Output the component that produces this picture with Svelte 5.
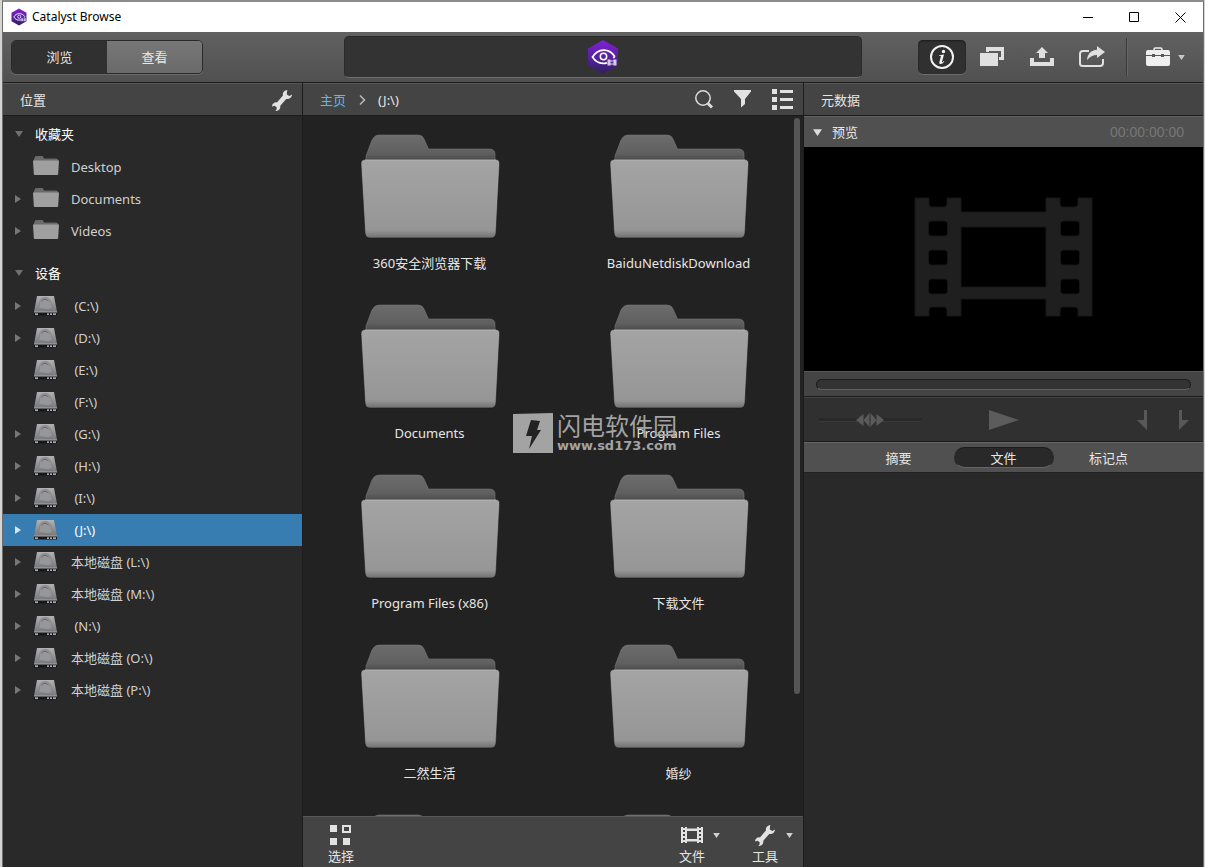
<script>
  let view = 'browse';
  let tab = '文件';
  let current = '(J:\\)';
  let infoOpen = true;
  let seek = 0;
  let jog = 50;

  const favorites = [
    { name: 'Desktop', leaf: true },
    { name: 'Documents' },
    { name: 'Videos' }
  ];
  const devices = [
    { name: '(C:\\)' },
    { name: '(D:\\)' },
    { name: '(E:\\)', leaf: true },
    { name: '(F:\\)', leaf: true },
    { name: '(G:\\)' },
    { name: '(H:\\)' },
    { name: '(I:\\)' },
    { name: '(J:\\)' },
    { name: '(L:\\)', label: '本地磁盘' },
    { name: '(M:\\)', label: '本地磁盘' },
    { name: '(N:\\)' },
    { name: '(O:\\)', label: '本地磁盘' },
    { name: '(P:\\)', label: '本地磁盘' }
  ];
  const folders = [
    '360安全浏览器下载', 'BaiduNetdiskDownload',
    'Documents', 'Program Files',
    'Program Files (x86)', '下载文件',
    '二然生活', '婚纱',
    '', ''
  ];
  const tabs = ['摘要', '文件', '标记点'];
</script>

<style>
  :global(body) {
    margin: 0;
    background: #d4d5d2;
    font-family: "Noto Sans", "Noto Sans CJK SC", sans-serif;
    font-size: 13px;
    line-height: 18px;
    color: #e6e6e6;
  }
  button, input {
    font: inherit;
    color: inherit;
    margin: 0;
    padding: 0;
    border: 0;
    background: none;
  }
  svg { display: block; flex: none; }
  h1, h2, h3 { margin: 0; font-size: inherit; font-weight: normal; }

  .window {
    box-sizing: border-box;
    height: 100vh;
    margin: 0 1px 0 2px;
    border: 1px solid #6d6d6d;
    border-width: 2px 1px 0 1px;
    border-top-color: #8c8c8a;
    display: flex;
    flex-direction: column;
    overflow: hidden;
    background: #292929;
  }

  /* title bar */
  .titlebar {
    flex: none;
    height: 30px;
    display: flex;
    align-items: center;
    background: #fff;
    color: #000;
    padding-left: 8px;
    gap: 5px;
  }
  .titlebar h1 { flex: 1; font-size: 12px; line-height: 30px; }
  .win-btns { display: flex; }
  .win-btns button { width: 46px; height: 30px; display: grid; place-items: center; }

  /* toolbar */
  .toolbar {
    flex: none;
    box-sizing: border-box;
    height: 51px;
    display: grid;
    grid-template-columns: 1fr minmax(100px, 518px) 1fr;
    align-items: center;
    background: linear-gradient(#616161, #505050);
    border-bottom: 1px solid #1c1c1c;
  }
  .segment {
    justify-self: start;
    box-sizing: border-box;
    display: flex;
    width: 192px;
    height: 34px;
    margin-left: 8px;
    border: 1px solid #2a2a2a;
    border-radius: 5px;
    overflow: hidden;
    box-shadow: 0 1px #6a6a6a;
  }
  .segment button { flex: 1; background: linear-gradient(#777, #6a6a6a); }
  .segment button.on { background: #303030; }
  .display {
    box-sizing: border-box;
    height: 42px;
    display: grid;
    place-items: center;
    background: #333;
    border: 1px solid #2a2a2a;
    border-bottom-color: #707070;
    border-radius: 5px;
  }
  .actions { justify-self: end; display: flex; align-items: center; }
  .actions button { width: 50px; height: 34px; display: grid; place-items: center; }
  .actions .info { width: 48px; border-radius: 5px; margin-right: 1px; }
  .actions .info.on {
    background: #303030;
    box-shadow: inset 0 1px 2px #1c1c1c, 0 1px #6c6c6c;
  }
  .divider { width: 1px; height: 38px; margin-left: 9px; background: #3a3a3a; border-right: 1px solid #666; }
  .actions .toolbox { display: flex; align-items: center; justify-content: center; gap: 8px; width: 75px; }

  /* panels */
  .panels {
    flex: 1;
    min-height: 0;
    display: grid;
    grid-template-columns: 299px minmax(0, 1fr) 399px;
  }
  .panel { display: flex; flex-direction: column; min-height: 0; min-width: 0; }
  .head {
    flex: none;
    box-sizing: border-box;
    height: 33px;
    display: flex;
    align-items: center;
    padding: 0 17px;
    background: #444;
    border-top: 1px solid #585858;
    border-bottom: 1px solid #1c1c1c;
  }
  .head h2 { flex: 1; }

  .locations { background: #292929; }
  .locations .head { padding-right: 9px; }
  .group { height: 35px; display: flex; align-items: center; gap: 12px; padding: 0 12px; }
  .tree + .group { margin-top: 8px; }
  .group h3 { color: #fff; }
  .tree { list-style: none; margin: 0; padding: 0; }
  .tree button {
    width: 100%;
    height: 32px;
    display: flex;
    align-items: center;
    text-align: left;
    padding-left: 12px;
    color: #d0d0d0;
  }
  .tree button.on { background: #377db1; color: #fff; }
  .arrow { width: 17px; color: #777; }
  .tree button.on .arrow { color: #d5e5f0; }
  .pic { width: 39px; height: 22px; }
  .label { white-space: pre; }

  .files {
    position: relative;
    background: #222;
    border-left: 1px solid #1c1c1c;
    border-right: 1px solid #1c1c1c;
  }
  .files .head { gap: 12px; padding-right: 9px; }
  .files .head a { color: #5cb8ea; text-decoration: none; }
  .tools { margin-left: auto; display: flex; gap: 20px; }
  .grid {
    flex: 1;
    min-height: 0;
    overflow: hidden;
    display: grid;
    grid-template-columns: 1fr 1fr;
    grid-auto-rows: 170px;
    padding-left: 2px;
  }
  .folder { display: flex; flex-direction: column; align-items: center; padding-top: 18px; }
  .folder span { margin-top: 15px; }
  .scroll {
    position: absolute;
    top: 35px;
    bottom: 173px;
    right: 3px;
    width: 6px;
    border-radius: 3px;
    background: #555;
  }
  .watermark {
    position: absolute;
    left: 210px;
    top: 330px;
    display: flex;
    gap: 4px;
    pointer-events: none;
    color: #a3a3a3;
  }
  .watermark strong { display: block; font-size: 24px; font-weight: 400; line-height: 26px; }
  .watermark small {
    display: block;
    font-family: "DejaVu Sans", sans-serif;
    font-size: 13px;
    font-weight: bold;
    line-height: 14px;
  }
  .bottom {
    flex: none;
    box-sizing: border-box;
    height: 51px;
    display: flex;
    align-items: start;
    gap: 32px;
    padding: 6px 10px 0 25px;
    background: #444;
    border-top: 1px solid #585858;
  }
  .bottom button { display: grid; grid-template-columns: auto auto; column-gap: 8px; justify-items: center; align-items: center; color: #e6e6e6; }
  .bottom button:first-child { margin-right: auto; }
  .bottom .icon { height: 24px; display: grid; place-items: center; }
  .bottom .text { grid-column: 1; }

  .metadata { background: #292929; }
  .preview-head {
    flex: none;
    box-sizing: border-box;
    height: 31px;
    display: flex;
    align-items: center;
    gap: 10px;
    padding: 0 19px 0 9px;
    background: #505050;
    border-top: 1px solid #626262;
  }
  .preview-head h3 { flex: 1; }
  .preview-head time { font-family: "Liberation Sans", sans-serif; font-size: 14px; color: #777; }
  .screen { flex: none; height: 224px; display: flex; align-items: start; justify-content: center; background: #000; }
  .screen svg { margin-top: 50px; }
  .seek {
    flex: none;
    box-sizing: border-box;
    height: 26px;
    display: flex;
    align-items: center;
    padding: 0 12px;
    background: #444;
    border-top: 1px solid #585858;
    border-bottom: 1px solid #1c1c1c;
  }
  input[type=range] { appearance: none; -webkit-appearance: none; width: 100%; box-sizing: border-box; }
  input[type=range]::-webkit-slider-thumb { -webkit-appearance: none; width: 1px; height: 1px; }
  .seek input {
    height: 11px;
    border-radius: 6px;
    background: #333;
    border: 1px solid #1c1c1c;
    border-bottom-color: #616161;
  }
  .transport {
    flex: none;
    box-sizing: border-box;
    height: 45px;
    display: grid;
    grid-template-columns: 1fr auto 1fr;
    align-items: center;
    padding: 0 14px;
    background: #303030;
    border-top: 1px solid #444;
    border-bottom: 1px solid #1c1c1c;
  }
  .jog { position: relative; width: 104px; display: grid; place-items: center; }
  .jog input { height: 4px; border-radius: 2px; background: #292929; border-bottom: 1px solid #383838; }
  .jog svg { position: absolute; pointer-events: none; }
  .marks { justify-self: end; display: flex; gap: 32px; }
  .tabs {
    flex: none;
    box-sizing: border-box;
    height: 31px;
    display: flex;
    justify-content: center;
    align-items: center;
    gap: 5px;
    background: #505050;
    border-top: 1px solid #666;
    border-bottom: 1px solid #222;
  }
  .tabs button { box-sizing: border-box; width: 100px; height: 21px; border: 1px solid transparent; border-radius: 11px; }
  .tabs button.on { background: #292929; border-color: #1c1c1c #292929 #646464; }
</style>

{#snippet wrench()}
  <svg width="22" height="24" viewBox="0 0 22 24" fill="#e2e2e2">
    <path d="M16.500 2c-3 .2-5.200 2.500-4.600 5.600L5.900 14.400C3.300 14.100 1 16 1 18.600l2.600-.8 2.200 1.700-.5 2.500-1.200.8c3.200.7 5.600-1.600 5.200-5l5.900-6.900c3 .7 5.700-1.400 5.900-4.500l-2.700 1.600-2.600-1.400.2-3z" />
  </svg>
{/snippet}

{#snippet down(size, fill)}
  <svg width={size} height={size - 2} viewBox="0 0 8 6"><path d="M0 0h8L4 6z" {fill} /></svg>
{/snippet}

{#snippet logo(w, h)}
  <svg width={w} height={h} viewBox="0 0 32 36">
    <defs>
      <linearGradient id="hex" x2="0" y2="1">
        <stop offset="0" stop-color="#8420d6" />
        <stop offset=".5" stop-color="#56219f" />
        <stop offset="1" stop-color="#30205e" />
      </linearGradient>
    </defs>
    <path d="M16 1 31 9.500v17L16 35 1 26.500v-17z" fill="url(#hex)" />
    <path d="M20 23.800c-6 1.700-11.500-.8-14.500-5.800C11 9 22 9 27.500 17.200c-.3 1-.7 1.500-1.200 2" fill="none" stroke="#fff" stroke-width="1.800" />
    <circle cx="16.500" cy="17.500" r="3.200" fill="none" stroke="#fff" stroke-width="1.500" />
    <path d="M21 20.500h8v6h-8z" fill="#56318c" />
    <path d="M20.500 20.500h3v1h3v-1h3v6h-3v-1h-3v1h-3zM23.500 22.500v2h3v-2z" fill="#d9c8ee" fill-rule="evenodd" />
  </svg>
{/snippet}

{#snippet smallFolder()}
  <svg width="28" height="20" viewBox="0 0 28 20">
    <path d="M2 6V3l1-2q.4-1 1.500-1H10q1 0 1.500 1l.5 1.500h12.500q1.500 0 1.500 1.500v3z" fill="#6a6a6a" />
    <path d="M1 4.500h26l-.8 13.500q0 1-1 1H2.800q-1 0-1-1z" fill="#9f9f9f" />
  </svg>
{/snippet}

{#snippet drive()}
  <svg width="28" height="22" viewBox="0 0 28 22">
    <defs>
      <linearGradient id="disk" x2="0" y2="1">
        <stop offset="0" stop-color="#b2b2b4" />
        <stop offset="1" stop-color="#77787c" />
      </linearGradient>
    </defs>
    <path d="M5 1h17l3 16H2z" fill="url(#disk)" />
    <path d="M6.500 13.500 8 6q1-3.500 5-3.500T18.500 6l2 6q-1 2-4 2.500z" fill="#96979a" stroke="#77787c" stroke-width=".6" />
    <path d="M9.500 6q3.500-3.500 7 0" fill="none" stroke="#66676b" />
    <path d="M2 17h23v3.500H2z" fill="#17171a" />
    <path d="M2 16.500h23v1H2z" fill="#a8a9ad" />
    <path d="M3 18.500h3v1.300H3zM15 18.500h2v1.300h-2zM18 18.500h2v1.300h-2zM21 18.500h3v1.300h-3z" fill="#dcdce0" />
  </svg>
{/snippet}

{#snippet row(item, icon)}
  <li>
    <button class:on={current === item.name} on:click={() => (current = item.name)}>
      <span class="arrow">
        {#if !item.leaf}
          <svg width="6" height="8" viewBox="0 0 6 8"><path d="M0 0l6 4-6 4z" fill="currentColor" /></svg>
        {/if}
      </span>
      <span class="pic">{@render icon()}</span>
      <span class="label">{icon === drive ? (item.label || '') + ' ' + item.name : item.name}</span>
    </button>
  </li>
{/snippet}

<div class="window">
  <header class="titlebar">
    {@render logo(16, 18)}
    <h1>Catalyst Browse</h1>
    <div class="win-btns">
      <button aria-label="Minimize">
        <svg width="11" height="11" viewBox="0 0 11 11"><path d="M0 5.500h10" stroke="#000" /></svg>
      </button>
      <button aria-label="Maximize">
        <svg width="11" height="11" viewBox="0 0 11 11"><path d="M.5.5h9v9h-9z" fill="none" stroke="#000" /></svg>
      </button>
      <button aria-label="Close">
        <svg width="11" height="11" viewBox="0 0 11 11"><path d="M.5.5l10 10M10.500.5l-10 10" stroke="#000" /></svg>
      </button>
    </div>
  </header>

  <div class="toolbar">
    <div class="segment">
      <button class:on={view === 'browse'} on:click={() => (view = 'browse')}>浏览</button>
      <button class:on={view === 'view'} on:click={() => (view = 'view')}>查看</button>
    </div>
    <div class="display">{@render logo(32, 36)}</div>
    <div class="actions">
      <button class="info" class:on={infoOpen} aria-label="Info" on:click={() => (infoOpen = !infoOpen)}>
        <svg width="26" height="26" viewBox="0 0 26 26">
          <circle cx="13" cy="13" r="11" fill="none" stroke="#f2f2f2" stroke-width="2" />
          <circle cx="14.500" cy="7.500" r="1.700" fill="#f2f2f2" />
          <path d="M10 11.200l5-.7-2 7.300c-.2.900.6.600 1.800-.8l.6.500c-2.400 3.400-5.800 3.200-5 .4l1.500-5.300c.2-.7-.5-.8-1.900-.7z" fill="#f2f2f2" />
        </svg>
      </button>
      <button aria-label="Windows">
        <svg width="24" height="20" viewBox="0 0 24 20" fill="#e0e0e0"><path d="M6 0h18v13h-5v-3h2V4H9v1H6zM0 6h18v13H0z" /></svg>
      </button>
      <button aria-label="Upload">
        <svg width="24" height="20" viewBox="0 0 24 20" fill="#e0e0e0"><path d="M12 0l6 6h-3v5H9V6H6zM0 11h4v4h16v-4h4v8H0z" /></svg>
      </button>
      <button aria-label="Share">
        <svg width="26" height="22" viewBox="0 0 26 22">
          <path d="M10 5H4Q1 5 1 8v9.500Q1 20 4 20h17q3 0 3-3v-4" fill="none" stroke="#e0e0e0" stroke-width="2" />
          <path d="M18 0l8 6-8 6V9c-4 0-7 1.500-10 5C8.500 8 12 4 18 3.700z" fill="#e0e0e0" />
        </svg>
      </button>
      <span class="divider"></span>
      <button class="toolbox" aria-label="Toolbox">
        <svg width="24" height="20" viewBox="0 0 24 20" fill="#efefef">
          <path d="M8 4V2.500Q8 1 9.500 1h5Q16 1 16 2.500V4" fill="none" stroke="#efefef" stroke-width="1.500" />
          <path d="M2 3h20q2 0 2 2v3h-6V7h-3v1H9V7H6v1H0V5q0-2 2-2zM0 9h6v1h3V9h6v1h3V9h6v8q0 2-2 2H2q-2 0-2-2z" />
        </svg>
        {@render down(7, '#c8c8c8')}
      </button>
    </div>
  </div>

  <div class="panels">
    <nav class="panel locations">
      <div class="head">
        <h2>位置</h2>
        <button aria-label="Settings">{@render wrench()}</button>
      </div>
      <div class="group">{@render down(8, '#707070')}<h3>收藏夹</h3></div>
      <ul class="tree">
        {#each favorites as item}
          {@render row(item, smallFolder)}
        {/each}
      </ul>
      <div class="group">{@render down(8, '#707070')}<h3>设备</h3></div>
      <ul class="tree">
        {#each devices as item}
          {@render row(item, drive)}
        {/each}
      </ul>
    </nav>

    <main class="panel files">
      <div class="head">
        <a href="#home">主页</a>
        <svg width="8" height="10" viewBox="0 0 8 10"><path d="M2 .5L6.500 5 2 9.500" fill="none" stroke="#bbb" stroke-width="1.500" /></svg>
        <span>{current}</span>
        <div class="tools">
          <button aria-label="Search">
            <svg width="20" height="22" viewBox="0 0 20 22" fill="none" stroke="#dcdcdc">
              <circle cx="9" cy="9" r="7.200" stroke-width="1.500" />
              <path d="M14 14.500l4 4" stroke-width="3" />
            </svg>
          </button>
          <button aria-label="Filter">
            <svg width="18" height="22" viewBox="0 0 18 22"><path d="M0 1h17v1.500L11 10v5l-4 3.500V10L0 2.500z" fill="#e2e2e2" /></svg>
          </button>
          <button aria-label="List">
            <svg width="22" height="22" viewBox="0 0 22 22" fill="#e2e2e2"><path d="M0 0h5v5H0zM0 8h5v5H0zM0 16h5v5H0zM8 1h13v3H8zM8 9h13v3H8zM8 17h13v3H8z" /></svg>
          </button>
        </div>
      </div>

      <div class="grid">
        {#each folders as name}
          <div class="folder">
            <svg width="140" height="105" viewBox="0 0 140 105">
              <defs>
                <linearGradient id="front" x2="0" y2="1">
                  <stop offset="0" stop-color="#a4a4a4" />
                  <stop offset=".9" stop-color="#969696" />
                  <stop offset="1" stop-color="#707070" />
                </linearGradient>
                <linearGradient id="back" x2="0" y2="1">
                  <stop offset="0" stop-color="#6c6c6c" />
                  <stop offset=".7" stop-color="#606060" />
                  <stop offset="1" stop-color="#484848" />
                </linearGradient>
              </defs>
              <path d="M6 27v-5L12 6q2.500-5 7-5h39q4.500 0 6 4l4.500 10H129q6 0 6 5v7z" fill="url(#back)" stroke="#777" stroke-width=".6" />
              <path d="M5 25.500h131q4 0 3.600 5L136 99q-.5 5-5 5H10q-4.500 0-5-5L1 30.500q-.4-5 4-5z" fill="url(#front)" stroke="#1a1a1a" stroke-width=".6" />
              <path d="M5 26h131" stroke="#b6b6b6" />
            </svg>
            <span>{name}</span>
          </div>
        {/each}
      </div>
      <div class="scroll"></div>

      <div class="watermark">
        <svg width="40" height="40" viewBox="0 0 40 40">
          <path d="M0 1l40-1v40H0z" fill="#a3a3a3" />
          <path d="M18 7l9 1-3 9h4L16 36l3-13h-6z" fill="#222" />
        </svg>
        <div><strong>闪电软件园</strong><small>www.sd173.com</small></div>
      </div>

      <footer class="bottom">
        <button>
          <span class="icon">
            <svg width="22" height="22" viewBox="0 0 22 22" fill="#e2e2e2"><path d="M0 1h7v7H0zM0 14h7v7H0zM13 14h7v7h-7z" /><path d="M13 2h7v6h-7z" fill="none" stroke="#e2e2e2" stroke-width="2" /></svg>
          </span>
          <span class="text">选择</span>
        </button>
        <button>
          <span class="icon">
            <svg width="22" height="18" viewBox="0 0 22 18">
              <path d="M0 1h6v1.500h10V1h6v16h-6v-1.500H6V17H0zM6 5v8h10V5z" fill="#e2e2e2" fill-rule="evenodd" />
              <path d="M2 1h2v1H2zM2 4h2v2H2zM2 8h2v2H2zM2 12h2v2H2zM2 16h2v1H2zM18 1h2v1h-2zM18 4h2v2h-2zM18 8h2v2h-2zM18 12h2v2h-2zM18 16h2v1h-2z" fill="#444" />
            </svg>
          </span>
          {@render down(7, '#d0d0d0')}
          <span class="text">文件</span>
        </button>
        <button>
          <span class="icon">{@render wrench()}</span>
          {@render down(7, '#d0d0d0')}
          <span class="text">工具</span>
        </button>
      </footer>
    </main>

    <aside class="panel metadata">
      <div class="head"><h2>元数据</h2></div>
      <div class="preview-head">
        {@render down(9, '#dcdcdc')}
        <h3>预览</h3>
        <time>00:00:00:00</time>
      </div>
      <div class="screen">
        <svg width="180" height="120" viewBox="0 0 180 120">
          <path d="M1 1h14v6q0 3 3 3h12q3 0 3-3V1h14v14h85V1h14v6q0 3 3 3h12q3 0 3-3V1h14v118h-14v-6q0-3-3-3h-12q-3 0-3 3v6h-14v-17H47v17H33v-6q0-3-3-3H18q-3 0-3 3v6H1zM47 30v60h85V30z" fill="#1f1f1f" stroke="#161616" fill-rule="evenodd" />
          {#each [24, 53, 82] as y}
            <rect x="14.500" {y} width="19" height="15" rx="3" stroke="#161616" />
            <rect x="146.500" {y} width="19" height="15" rx="3" stroke="#161616" />
          {/each}
        </svg>
      </div>
      <div class="seek"><input type="range" aria-label="Position" bind:value={seek} /></div>
      <div class="transport">
        <div class="jog">
          <input type="range" aria-label="Jog" bind:value={jog} />
          <svg width="28" height="14" viewBox="0 0 28 14" fill="#5a5a5a"><path d="M7.500 1v12L0 7zM13.500 0v14L7.500 7zM14.500 0v14l6-7zM20.500 1v12L28 7z" /></svg>
        </div>
        <button aria-label="Play">
          <svg width="32" height="22" viewBox="0 0 32 22"><path d="M1 1l30 10L1 21z" fill="#5c5c5c" /></svg>
        </button>
        <div class="marks">
          <button aria-label="Mark in"><svg width="10" height="22" viewBox="0 0 10 22"><path d="M7 1h3v20L0 11h7z" fill="#585858" /></svg></button>
          <button aria-label="Mark out"><svg width="10" height="22" viewBox="0 0 10 22"><path d="M0 1h3v10h7L0 21z" fill="#585858" /></svg></button>
        </div>
      </div>
      <div class="tabs">
        {#each tabs as t}
          <button class:on={tab === t} on:click={() => (tab = t)}>{t}</button>
        {/each}
      </div>
    </aside>
  </div>
</div>
